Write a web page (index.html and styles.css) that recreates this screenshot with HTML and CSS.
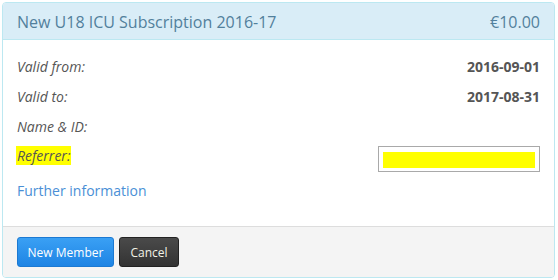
FILE: index.html
```html
<!DOCTYPE html>
<html>
<head>
<meta charset="utf-8">
<link rel="stylesheet" href="styles.css">
</head>
<body>
<div class="panel">
  <div class="panel-heading">
    <span class="title">New U18 ICU Subscription 2016-17</span>
    <span class="price">€10.00</span>
  </div>
  <div class="panel-body">
    <div class="row">
      <span class="label">Valid from:</span>
      <span class="value">2016-09-01</span>
    </div>
    <div class="row">
      <span class="label">Valid to:</span>
      <span class="value">2017-08-31</span>
    </div>
    <div class="row">
      <span class="label">Name &amp; ID:</span>
    </div>
    <div class="row row-ref">
      <span class="label"><span class="hl">Referrer:</span></span>
      <span class="input"><span class="input-fill"></span></span>
    </div>
    <div class="row row-link">
      <a class="link" href="#">Further information</a>
    </div>
  </div>
  <div class="panel-footer">
    <button class="btn btn-primary">New Member</button>
    <button class="btn btn-dark">Cancel</button>
  </div>
</div>
</body>
</html>
```
FILE: styles.css
```css
* { box-sizing: border-box; }
html, body { margin: 0; padding: 0; background: #fff; }
body {
  padding: 2px 3px 0 2px;
  font-family: "Open Sans", "Liberation Sans", sans-serif;
  font-size: 14px;
  color: #555;
}
.panel {
  width: 553px;
  height: 276px;
  border: 1px solid #bce8f1;
  border-radius: 4px;
  display: flex;
  flex-direction: column;
  overflow: hidden;
}
.panel-heading {
  background: #d9edf7;
  border-bottom: 1px solid #bce8f1;
  height: 37px;
  padding: 0 14px;
  display: flex;
  align-items: center;
  justify-content: space-between;
  font-size: 16px;
  color: #52809c;
}
.title { padding-top: 1px; }
.price { padding-top: 1px; }
.panel-body {
  flex: 1;
  padding: 11px 14px 0 14px;
  border-bottom: 1px solid #dddddd;
}
.row {
  height: 30px;
  display: flex;
  align-items: center;
  justify-content: space-between;
}
.label {
  font-style: italic;
  color: #555;
}
.hl {
  background: #ffff00;
  padding: 0 1px 0 1px;
  margin-left: -1px;
}
.value {
  font-weight: bold;
  color: #555;
}
.row-ref { align-items: flex-start; }
.row-ref .label { margin-top: 5px; }
.input {
  margin-top: 5px;
  width: 162px;
  height: 26px;
  border: 1px solid #a9a9a9;
  background: #fff;
  padding: 5px 4px 3px 4px;
  display: block;
}
.input-fill {
  display: block;
  height: 16px;
  background: #ffff00;
}
.row-link { margin-top: 4px; }
.link {
  color: #4a8fd6;
  text-decoration: none;
  font-size: 14px;
}
.panel-footer {
  background: #f4f4f4;
  height: 50px;
  padding: 10px 14px 0 14px;
  display: flex;
  gap: 5px;
  align-items: flex-start;
}
.btn {
  font-family: "Open Sans", "Liberation Sans", sans-serif;
  font-size: 12px;
  height: 30px;
  padding: 0;
  border-radius: 3px;
  color: #fff;
  white-space: nowrap;
  cursor: pointer;
}
.btn-primary {
  width: 97px;
  background: linear-gradient(#3aa0f4, #1e84e4);
  border: 1px solid #1b79d2;
}
.btn-dark {
  width: 60px;
  background: linear-gradient(#4a4a4a, #333);
  border: 1px solid #222;
  color: #f3f3e6;
}
```
